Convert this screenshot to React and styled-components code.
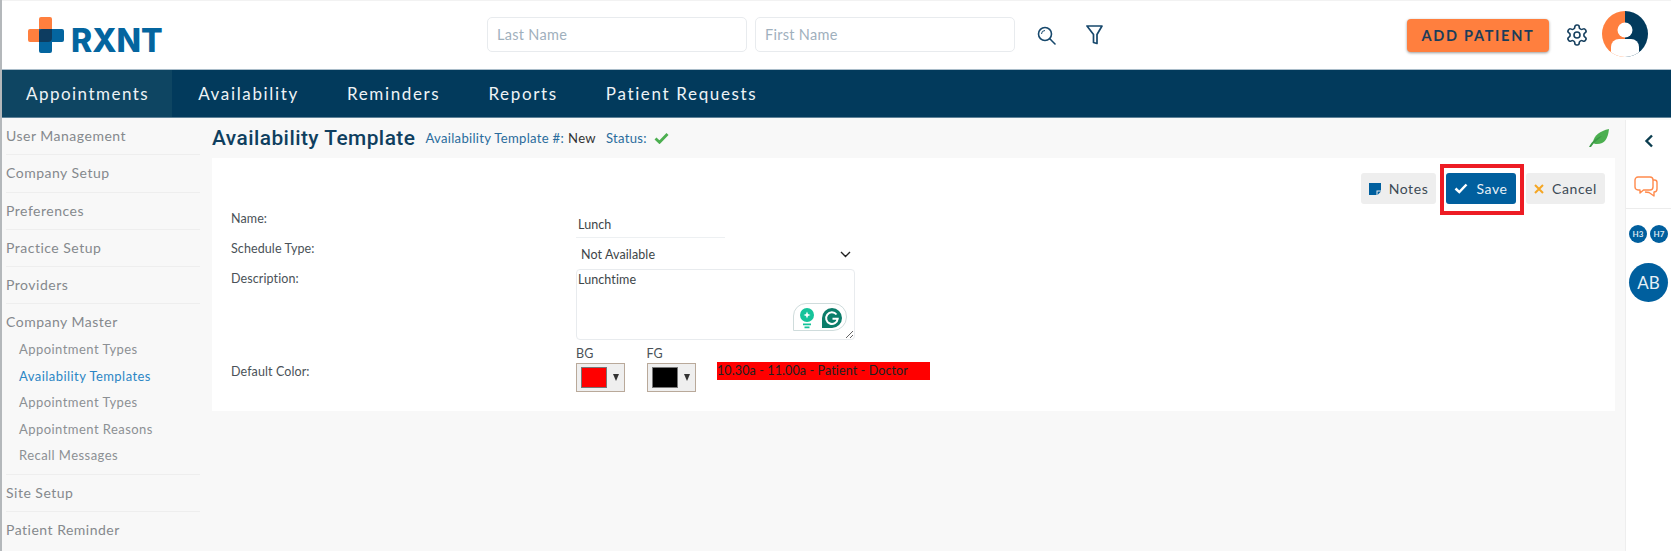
import React from "react";
import styled, { createGlobalStyle } from "styled-components";

const Global = createGlobalStyle`
  html, body { margin: 0; padding: 0; background: #f8f8f8; }
  body { font-family: "Lato", "Open Sans", sans-serif; color: #3d4a55; overflow: hidden; }
  * { box-sizing: border-box; }
`;

const Page = styled.div`
  width: 1671px; height: 551px; display: flex; flex-direction: column;
  border-left: 2px solid #b4b8bb; overflow: hidden;
`;
const Header = styled.header`
  height: 70px; flex: none; background: #fff; border-top: 1px solid #f2f2f2; border-bottom: 1px solid #a9bcc9;
  display: flex; align-items: center; padding: 0 23px 0 26px;
`;
const Logo = styled.div`display: flex; align-items: center; gap: 7px; width: 459px;`;
const LogoText = styled.span`
  font: 800 32px "Inter", sans-serif; color: #04659f; line-height: 36px; margin-top: 11px;
`;
const SearchBox = styled.input`
  width: 260px; height: 35px; border: 1px solid #e8ebee; border-radius: 5px; padding: 0 9px; margin-top: -2px;
  font: 400 14.5px "Lato", sans-serif; letter-spacing: .3px; margin-right: 8px; outline: none;
  &::placeholder { color: #9fb0bd; opacity: 1; }
`;
const IconBtn = styled.span`display: inline-flex; margin-left: ${p => p.$ml || 0}px;`;
const Spacer = styled.div`flex: 1;`;
const AddBtn = styled.button`
  width: 142px; height: 33px; border: 0; border-radius: 4px; background: #ff7f3e; color: #1c3d5a;
  font: 700 14.5px "Lato", sans-serif; letter-spacing: 1.7px; box-shadow: 0 1px 3px rgba(0,0,0,.4);
`;
const Avatar = styled.span`display: inline-flex; margin-left: 13px; margin-top: -3px;`;

const Nav = styled.nav`
  height: 48px; flex: none; background: #023a5c; border-bottom: 1px solid #5f8298; display: flex;
`;
const Tab = styled.a`
  display: flex; align-items: center; height: 100%; font: 400 17px "Lato", sans-serif;
  letter-spacing: ${p => (p.$active ? "1.47px" : "1.65px")};
  padding: 0 ${p => (p.$active ? "23px" : "24px")} 0 24px;
  margin-right: ${p => (p.$active ? "2px" : "0")};
  background: ${p => (p.$active ? "#0e4562" : "transparent")};
  color: #eef3f6;
`;

const Body = styled.div`flex: 1; display: flex; min-height: 0;`;
const Sidebar = styled.aside`width: 210px; flex: none; padding: 0 12px 0 4px; background: #f8f8f8;`;
const SideGroup = styled.div`
  border-bottom: ${p => (p.$last ? "none" : "1px solid #eeeeee")};
  padding: 9px 0 ${p => (p.$sub ? "5px" : "9.3px")};
`;
const SideHead = styled.div`
  font-size: 14px; line-height: 18px; letter-spacing: .5px; color: #85898d;
  margin-bottom: ${p => (p.$open ? "4.5px" : "0")};
`;
const SubItem = styled.div`
  font-size: 13px; line-height: 18px; height: 26.6px; padding: 4px 0 0 13px; letter-spacing: .45px;
  color: ${p => (p.$active ? "#2b86c5" : "#8c9094")};
`;

const Main = styled.main`width: 1403px; flex: none; display: flex; flex-direction: column;`;
const TitleRow = styled.div`height: 40px; flex: none; display: flex; align-items: center; padding-bottom: 1px;`;
const Title = styled.h1`
  margin: 0; font: 500 20.9px "Roboto", sans-serif; letter-spacing: .45px; color: #0f3f5f;
`;
const Meta = styled.span`font-size: 13.1px; letter-spacing: .3px; color: #2a6c9c; margin-left: ${p => p.$ml}px; display: inline-flex; align-items: center;`;
const MetaVal = styled.span`color: #333; margin-left: 4px;`;
const Card = styled.section`height: 253px; flex: none; background: #fff; padding: 15px 10px 0 19px;`;
const Actions = styled.div`display: flex; justify-content: flex-end; gap: 10px; height: 31px;`;
const Action = styled.button`
  height: 31px; width: ${p => p.$w}px; border: 0; border-radius: 3px; display: flex; align-items: center; justify-content: center; gap: 8px;
  background: ${p => (p.$primary ? "#005f9e" : "#eeeeee")}; color: ${p => (p.$primary ? "#e8f1f7" : "#3d4a55")};
  font: 400 14px "Lato", sans-serif; letter-spacing: .6px; position: relative;
`;
const Highlight = styled.span`
  position: absolute; left: -6px; right: -8px; top: -9px; bottom: -11px; border: 4px solid #ed1c24; pointer-events: none;
`;

const Form = styled.div`
  display: grid; grid-template-columns: 345px 1fr; font-size: 12.5px; letter-spacing: .1px; color: #4a5258;
`;
const Label = styled.div`height: ${p => p.$h}px; line-height: 16px; padding-top: ${p => p.$pt || 0}px;`;
const Field = styled.div`height: ${p => p.$h}px; position: relative;`;
const NameField = styled.div`
  width: 149px; height: 34px; padding: 12px 0 0 2px; border-bottom: 1px solid #edf0f2; color: #3d4548; font-size: 12.5px; line-height: 18px;
`;
const SelectBox = styled.div`
  width: 284px; height: 32px; padding: 0 9px 0 5px; display: flex; align-items: center; justify-content: space-between; color: #3d4548;
`;
const Area = styled.textarea`
  display: block; width: 279px; height: 71px; border: 1px solid #e8ebee; border-radius: 4px; padding: 2px 1px;
  font: 400 12.5px "Lato", sans-serif; letter-spacing: .1px; color: #3d4548; outline: none; resize: both;
`;
const Grammarly = styled.span`position: absolute; left: 217px; top: 34px; display: inline-flex;`;
const ColorRow = styled.div`display: flex; align-items: flex-start; margin-top: -2px;`;
const ColorCol = styled.div`width: 70.5px; display: flex; flex-direction: column; gap: 2px; line-height: 15px;`;
const ColorBtn = styled.div`
  width: 49px; height: 29px; background: #efefef; border: 1px solid #b9a99a; display: flex; align-items: center; padding-left: 4px; gap: 6px;
`;
const Swatch = styled.span`width: 26px; height: 21px; background: ${p => p.$c}; border: 1px solid #777;`;
const Caret = styled.span`width: 0; height: 0; border-left: 3.5px solid transparent; border-right: 3.5px solid transparent; border-top: 7px solid #333;`;
const Preview = styled.div`
  width: 213px; height: 18px; background: #ff0000; color: #202020; margin-top: 16px; line-height: 18px; font-size: 12.5px; white-space: nowrap; overflow: hidden; letter-spacing: .12px;
`;

const Rail = styled.aside`
  margin-left: 10px; width: 46px; flex: none; background: #fff; border-left: 1px solid #eeeeee; margin-top: 2px;
  display: flex; flex-direction: column; align-items: center;
`;
const RailBlock = styled.div`
  width: 100%; height: ${p => p.$h}px; flex: none; display: flex; align-items: center; justify-content: center; gap: ${p => p.$gap || 0}px;
  border-bottom: ${p => (p.$line ? "1px solid #ececec" : "none")};
`;
const Mini = styled.span`
  width: 18px; height: 18px; border-radius: 50%; background: #005f9e; color: #dbe8f1; font: 700 8px "Lato", sans-serif;
  display: flex; align-items: center; justify-content: center;
`;
const Big = styled.span`
  width: 39px; height: 39px; border-radius: 50%; background: #005f9e; color: #e6f0f6; font: 400 17px "Lato", sans-serif;
  display: flex; align-items: center; justify-content: center;
`;

const LogoMark = () => (
  <svg width="36" height="36" viewBox="0 0 36 36">
    <path d="M11 2a2 2 0 0 1 2-2h9a2 2 0 0 1 2 2v10h-13v13H2a2 2 0 0 1-2-2v-9a2 2 0 0 1 2-2h9z" fill="#ff7f3e" />
    <path d="M11 12h23a2 2 0 0 1 2 2v9a2 2 0 0 1-2 2H24v9a2 2 0 0 1-2 2h-9a2 2 0 0 1-2-2z" fill="#04659f" />
    <path d="M15 12h9v9a4 4 0 0 1-4 4h-9v-9a4 4 0 0 1 4-4z" fill="#0d3c60" />
  </svg>
);

export default function App() {
  return (
    <>
      <Global />
      <Page>
        <Header>
          <Logo>
            <LogoMark />
            <LogoText>RXNT</LogoText>
          </Logo>
          <SearchBox placeholder="Last Name" />
          <SearchBox placeholder="First Name" />
          <IconBtn $ml={14}>
            <svg width="19" height="19" viewBox="0 0 19 19" fill="none" stroke="#17486c" strokeWidth="1.600">
              <circle cx="8" cy="8" r="6.500" />
              <path d="M12.800 12.800L18 18" strokeLinecap="round" />
              <path d="M4.500 8a3.500 3.500 0 0 1 3.500-3.500" strokeWidth="1" />
            </svg>
          </IconBtn>
          <IconBtn $ml={30}>
            <svg width="17" height="20" viewBox="0 0 17 20" fill="none" stroke="#17486c" strokeWidth="1.700" strokeLinejoin="round">
              <path d="M1 1h15L11 9.500V18.500L7.500 17.500V9.500z" />
            </svg>
          </IconBtn>
          <Spacer />
          <AddBtn>ADD PATIENT</AddBtn>
          <IconBtn $ml={16}>
            <svg width="24" height="24" viewBox="0 0 24 24" fill="none" stroke="#17405f" strokeWidth="1.600" strokeLinecap="round" strokeLinejoin="round">
              <path d="M12.220 2h-.44a2 2 0 0 0-2 2v.18a2 2 0 0 1-1 1.730l-.43.25a2 2 0 0 1-2 0l-.15-.08a2 2 0 0 0-2.730.73l-.22.38a2 2 0 0 0 .73 2.730l.15.1a2 2 0 0 1 1 1.720v.51a2 2 0 0 1-1 1.740l-.15.09a2 2 0 0 0-.73 2.730l.22.38a2 2 0 0 0 2.730.73l.15-.08a2 2 0 0 1 2 0l.43.25a2 2 0 0 1 1 1.730V20a2 2 0 0 0 2 2h.44a2 2 0 0 0 2-2v-.18a2 2 0 0 1 1-1.730l.43-.25a2 2 0 0 1 2 0l.15.08a2 2 0 0 0 2.730-.73l.22-.39a2 2 0 0 0-.73-2.730l-.15-.08a2 2 0 0 1-1-1.740v-.5a2 2 0 0 1 1-1.740l.15-.09a2 2 0 0 0 .73-2.730l-.22-.38a2 2 0 0 0-2.730-.73l-.15.08a2 2 0 0 1-2 0l-.43-.25a2 2 0 0 1-1-1.730V4a2 2 0 0 0-2-2z" />
              <circle cx="12" cy="12" r="3" />
            </svg>
          </IconBtn>
          <Avatar>
            <svg width="46" height="46" viewBox="0 0 46 46">
              <defs><clipPath id="av"><circle cx="23" cy="23" r="23" /></clipPath></defs>
              <g clipPath="url(#av)">
                <rect width="23" height="46" fill="#ff7f3e" />
                <rect x="23" width="23" height="46" fill="#023a5c" />
                <circle cx="23" cy="19" r="7.500" fill="#fff" />
                <path d="M9 46V36a8 8 0 0 1 8-8h12a8 8 0 0 1 8 8v10z" fill="#fff" />
              </g>
            </svg>
          </Avatar>
        </Header>
        <Nav>
          <Tab $active>Appointments</Tab>
          <Tab>Availability</Tab>
          <Tab>Reminders</Tab>
          <Tab>Reports</Tab>
          <Tab>Patient Requests</Tab>
        </Nav>
        <Body>
          <Sidebar>
            <SideGroup><SideHead>User Management</SideHead></SideGroup>
            <SideGroup><SideHead>Company Setup</SideHead></SideGroup>
            <SideGroup><SideHead>Preferences</SideHead></SideGroup>
            <SideGroup><SideHead>Practice Setup</SideHead></SideGroup>
            <SideGroup><SideHead>Providers</SideHead></SideGroup>
            <SideGroup $sub>
              <SideHead $open>Company Master</SideHead>
              <SubItem>Appointment Types</SubItem>
              <SubItem $active>Availability Templates</SubItem>
              <SubItem>Appointment Types</SubItem>
              <SubItem>Appointment Reasons</SubItem>
              <SubItem>Recall Messages</SubItem>
            </SideGroup>
            <SideGroup><SideHead>Site Setup</SideHead></SideGroup>
            <SideGroup $last><SideHead>Patient Reminder</SideHead></SideGroup>
          </Sidebar>
          <Main>
            <TitleRow>
              <Title>Availability Template</Title>
              <Meta $ml={10}>Availability Template #: <MetaVal>New</MetaVal></Meta>
              <Meta $ml={10}>Status:
                <svg width="15" height="12" viewBox="0 0 15 12" style={{ marginLeft: 7 }}>
                  <path d="M1.500 6.500l4 3.800L13.500 2" fill="none" stroke="#4caf50" strokeWidth="2.800" />
                </svg>
              </Meta>
              <Spacer />
              <svg width="20" height="18" viewBox="0 0 20 18" style={{ marginRight: 6 }}>
                <path d="M20 0C19 9 16 15 8 15c-2 0-3-.5-4-1.500C5 6 11 2 20 0z" fill="#4caf50" />
                <path d="M0 18c3-6 7-9 13-11-3 3-8 6-11 11z" fill="#3c9a46" />
              </svg>
            </TitleRow>
            <Card>
              <Actions>
                <Action $w={75}>
                  <svg width="12" height="12" viewBox="0 0 12 12"><path d="M0 0h12v7.500H7.500V12H0z" fill="#005f9e" /><path d="M8.500 8.500H12L8.500 12z" fill="#005f9e" /></svg>
                  Notes
                </Action>
                <Action $w={70} $primary>
                  <svg width="14" height="11" viewBox="0 0 14 11"><path d="M1.500 5.500l3.800 3.600L12.500 1.500" fill="none" stroke="#fff" strokeWidth="2.500" /></svg>
                  Save
                  <Highlight />
                </Action>
                <Action $w={79}>
                  <svg width="10" height="10" viewBox="0 0 10 10"><path d="M1 1l8 8M9 1l-8 8" stroke="#f5a623" strokeWidth="2" /></svg>
                  Cancel
                </Action>
              </Actions>
              <Form>
                <Label $h={34} $pt={7}>Name:</Label>
                <Field $h={34}><NameField>Lunch</NameField></Field>
                <Label $h={31} $pt={3}>Schedule Type:</Label>
                <Field $h={31}>
                  <SelectBox>
                    Not Available
                    <svg width="11" height="7" viewBox="0 0 11 7"><path d="M1 1l4.500 4.500L10 1" fill="none" stroke="#222" strokeWidth="1.400" /></svg>
                  </SelectBox>
                </Field>
                <Label $h={79} $pt={2}>Description:</Label>
                <Field $h={79}>
                  <Area readOnly defaultValue="Lunchtime" />
                  <Grammarly>
                    <svg width="54" height="28" viewBox="0 0 54 28">
                      <path d="M.5 27.500V13A12.500 12.500 0 0 1 13 .5H41A13 13 0 0 1 53.500 14 13.500 13.500 0 0 1 40 27.500Z" fill="#fff" stroke="#cfdcdc" />
                      <circle cx="14" cy="12" r="7" fill="#15c39a" />
                      <path d="M14 8.500l1 2.500 2.500 1-2.500 1-1 2.500-1-2.500-2.500-1 2.500-1z" fill="#fff" />
                      <path d="M10 20.500h8v1.800h-8zM11.500 23.500h5v1.800h-5z" fill="#15c39a" />
                      <path d="M29 25V15a10 10 0 1 1 10 10z" fill="#0b7d6a" />
                      <path d="M43.500 11.500a5.800 5.800 0 1 0 1.200 4.300H39.500" fill="none" stroke="#fff" strokeWidth="2" />
                    </svg>
                  </Grammarly>
                </Field>
                <Label $h={60} $pt={16}>Default Color:</Label>
                <Field $h={60}>
                  <ColorRow>
                    <ColorCol>BG<ColorBtn><Swatch $c="#ff0000" /><Caret /></ColorBtn></ColorCol>
                    <ColorCol>FG<ColorBtn><Swatch $c="#000000" /><Caret /></ColorBtn></ColorCol>
                    <Preview>10.30a - 11.00a - Patient - Doctor</Preview>
                  </ColorRow>
                </Field>
              </Form>
            </Card>
          </Main>
          <Rail>
            <RailBlock $h={42}>
              <svg width="10" height="14" viewBox="0 0 10 14"><path d="M8 1.500L2.500 7 8 12.500" fill="none" stroke="#0b3d4f" strokeWidth="2.400" /></svg>
            </RailBlock>
            <RailBlock $h={47} $line>
              <svg width="24" height="21" viewBox="0 0 24 21" fill="none" stroke="#ff8a4c" strokeWidth="1.400" strokeLinejoin="round" style={{ marginLeft: -5, marginTop: 3 }}>
                <path d="M4 1h12a3 3 0 0 1 3 3v7a3 3 0 0 1-3 3H9.500L6 17v-3H4a3 3 0 0 1-3-3V4a3 3 0 0 1 3-3z" />
                <path d="M19 4h1.500A2.500 2.500 0 0 1 23 6.500V13a3 3 0 0 1-3 3v4l-5-3.500L11 16" />
              </svg>
            </RailBlock>
            <RailBlock $h={50} $gap={3}>
              <Mini>H3</Mini><Mini>H7</Mini>
            </RailBlock>
            <RailBlock $h={46}><Big>AB</Big></RailBlock>
          </Rail>
        </Body>
      </Page>
    </>
  );
}
